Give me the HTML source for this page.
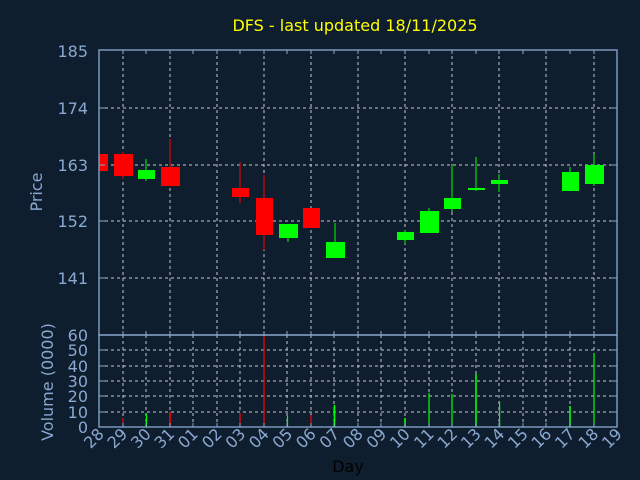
<!DOCTYPE html>
<html><head><meta charset="utf-8"><style>
html,body{margin:0;padding:0;background:#0f1e2f;}
svg{display:block;font-family:"DejaVu Sans","Liberation Sans",sans-serif;}
</style></head><body>
<svg width="640" height="480" viewBox="0 0 640 480" xmlns="http://www.w3.org/2000/svg">
<rect width="640" height="480" fill="#0f1e2f"/>
<text x="355" y="31" fill="#ffff00" font-size="16" text-anchor="middle">DFS - last updated 18/11/2025</text>
<g stroke="#c8c8c8" stroke-width="1" stroke-dasharray="3,3" fill="none">
<!-- price horizontal grid -->
<line x1="99" y1="108" x2="617" y2="108"/><line x1="99" y1="165" x2="617" y2="165"/>
<line x1="99" y1="221" x2="617" y2="221"/><line x1="99" y1="278" x2="617" y2="278"/>
<!-- price vertical grid -->
<line x1="123" y1="50" x2="123" y2="335"/><line x1="170" y1="50" x2="170" y2="335"/>
<line x1="217" y1="50" x2="217" y2="335"/><line x1="264" y1="50" x2="264" y2="335"/>
<line x1="311" y1="50" x2="311" y2="335"/><line x1="358" y1="50" x2="358" y2="335"/>
<line x1="405" y1="50" x2="405" y2="335"/><line x1="452" y1="50" x2="452" y2="335"/>
<line x1="499" y1="50" x2="499" y2="335"/><line x1="546" y1="50" x2="546" y2="335"/>
<line x1="594" y1="50" x2="594" y2="335"/>
<!-- volume horizontal -->
<line x1="99" y1="350" x2="617" y2="350"/><line x1="99" y1="366" x2="617" y2="366"/>
<line x1="99" y1="381" x2="617" y2="381"/><line x1="99" y1="396" x2="617" y2="396"/>
<line x1="99" y1="412" x2="617" y2="412"/>
<!-- volume vertical -->
<line x1="123" y1="335" x2="123" y2="427"/><line x1="146" y1="335" x2="146" y2="427"/>
<line x1="170" y1="335" x2="170" y2="427"/><line x1="193" y1="335" x2="193" y2="427"/>
<line x1="217" y1="335" x2="217" y2="427"/><line x1="240" y1="335" x2="240" y2="427"/>
<line x1="264" y1="335" x2="264" y2="427"/><line x1="287" y1="335" x2="287" y2="427"/>
<line x1="311" y1="335" x2="311" y2="427"/><line x1="334" y1="335" x2="334" y2="427"/>
<line x1="358" y1="335" x2="358" y2="427"/><line x1="381" y1="335" x2="381" y2="427"/>
<line x1="405" y1="335" x2="405" y2="427"/><line x1="429" y1="335" x2="429" y2="427"/>
<line x1="452" y1="335" x2="452" y2="427"/><line x1="476" y1="335" x2="476" y2="427"/>
<line x1="499" y1="335" x2="499" y2="427"/><line x1="523" y1="335" x2="523" y2="427"/>
<line x1="546" y1="335" x2="546" y2="427"/><line x1="570" y1="335" x2="570" y2="427"/>
<line x1="594" y1="335" x2="594" y2="427"/>
</g>
<!-- candles -->
<g fill="#ff0000" stroke="#ff0000" stroke-width="1">
<rect x="99" y="154" width="9" height="17" stroke="none"/>
<line x1="123" y1="152" x2="123" y2="179"/><rect x="114" y="154" width="19" height="22" stroke="none"/>
<line x1="170" y1="139" x2="170" y2="186"/><rect x="161" y="167" width="19" height="19" stroke="none"/>
<line x1="240" y1="162" x2="240" y2="203"/><rect x="232" y="188" width="17" height="9" stroke="none"/>
<line x1="264" y1="175" x2="264" y2="250"/><rect x="256" y="198" width="17" height="37" stroke="none"/>
<line x1="311" y1="208" x2="311" y2="228"/><rect x="303" y="208" width="17" height="20" stroke="none"/>
</g>
<g fill="#00ff00" stroke="#00ff00" stroke-width="1">
<line x1="146" y1="159" x2="146" y2="181"/><rect x="138" y="170" width="17" height="9" stroke="none"/>
<line x1="288" y1="224" x2="288" y2="242"/><rect x="279" y="224" width="19" height="14" stroke="none"/>
<line x1="335" y1="223" x2="335" y2="258"/><rect x="326" y="242" width="19" height="16" stroke="none"/>
<line x1="405" y1="230" x2="405" y2="244"/><rect x="397" y="232" width="17" height="8" stroke="none"/>
<line x1="429" y1="208" x2="429" y2="233"/><rect x="420" y="211" width="19" height="22" stroke="none"/>
<line x1="452" y1="165" x2="452" y2="212"/><rect x="444" y="198" width="17" height="11" stroke="none"/>
<line x1="476" y1="157" x2="476" y2="191"/><rect x="468" y="188" width="17" height="2" stroke="none"/>
<line x1="499" y1="174" x2="499" y2="192"/><rect x="491" y="180" width="17" height="4" stroke="none"/>
<line x1="570" y1="167" x2="570" y2="191"/><rect x="562" y="172" width="17" height="19" stroke="none"/>
<line x1="594" y1="154" x2="594" y2="186"/><rect x="585" y="165" width="19" height="19" stroke="none"/>
</g>
<!-- volume bars -->
<g stroke-width="1.2">
<line x1="123" y1="418" x2="123" y2="427" stroke="#ff0000"/>
<line x1="146.5" y1="414" x2="146.5" y2="427" stroke="#00ff00"/>
<line x1="170" y1="412" x2="170" y2="427" stroke="#ff0000" stroke-width="1.6"/>
<line x1="240" y1="413" x2="240" y2="427" stroke="#ff0000"/>
<line x1="264" y1="336" x2="264" y2="427" stroke="#ff0000"/>
<line x1="287.5" y1="416" x2="287.5" y2="427" stroke="#00ff00"/>
<line x1="311" y1="415" x2="311" y2="427" stroke="#ff0000"/>
<line x1="334.5" y1="405" x2="334.5" y2="427" stroke="#00ff00" stroke-width="1.6"/>
<line x1="405" y1="418" x2="405" y2="427" stroke="#00ff00" stroke-width="1.6"/>
<line x1="429" y1="393" x2="429" y2="427" stroke="#00ff00"/>
<line x1="452" y1="394" x2="452" y2="427" stroke="#00ff00"/>
<line x1="476" y1="374" x2="476" y2="427" stroke="#00ff00" stroke-width="1.6"/>
<line x1="499.6" y1="402" x2="499.6" y2="427" stroke="#00ff00"/>
<line x1="570" y1="406" x2="570" y2="427" stroke="#00ff00" stroke-width="1.6"/>
<line x1="594" y1="353" x2="594" y2="427" stroke="#00ff00"/>
</g>
<!-- frames -->
<g stroke="#8aa8d0" stroke-width="1.3" fill="none">
<rect x="99" y="50" width="518" height="285"/>
<rect x="99" y="335" width="518" height="92"/>
</g>
<g stroke="#8aa8d0" stroke-width="1">
<path d="M99 108h6M99 165h6M99 221h6M99 278h6M617 108h-6M617 165h-6M617 221h-6M617 278h-6
M99 350h6M99 366h6M99 381h6M99 396h6M99 412h6M617 350h-6M617 366h-6M617 381h-6M617 396h-6M617 412h-6
M123 50v4M146 50v4M170 50v4M193 50v4M217 50v4M240 50v4M264 50v4M287 50v4M311 50v4M334 50v4M358 50v4M381 50v4M405 50v4M429 50v4M452 50v4M476 50v4M499 50v4M523 50v4M546 50v4M570 50v4M594 50v4
M123 335v-4M146 335v-4M170 335v-4M193 335v-4M217 335v-4M240 335v-4M264 335v-4M287 335v-4M311 335v-4M334 335v-4M358 335v-4M381 335v-4M405 335v-4M429 335v-4M452 335v-4M476 335v-4M499 335v-4M523 335v-4M546 335v-4M570 335v-4M594 335v-4
M123 427v-4M146 427v-4M170 427v-4M193 427v-4M217 427v-4M240 427v-4M264 427v-4M287 427v-4M311 427v-4M334 427v-4M358 427v-4M381 427v-4M405 427v-4M429 427v-4M452 427v-4M476 427v-4M499 427v-4M523 427v-4M546 427v-4M570 427v-4M594 427v-4"/>
</g>
<!-- y labels -->
<g fill="#8aa8d0" font-size="16" text-anchor="end">
<text x="88" y="57">185</text><text x="88" y="114">174</text><text x="88" y="171">163</text>
<text x="88" y="227">152</text><text x="88" y="284">141</text>
<text x="88" y="341">60</text><text x="88" y="356">50</text><text x="88" y="372">40</text>
<text x="88" y="387">30</text><text x="88" y="402">20</text><text x="88" y="418">10</text><text x="88" y="433">0</text>
</g>
<text transform="translate(42,192) rotate(-90)" fill="#8aa8d0" font-size="16" text-anchor="middle">Price</text>
<text transform="translate(53,382) rotate(-90)" fill="#8aa8d0" font-size="16" text-anchor="middle">Volume (0000)</text>
<!-- x labels -->
<g fill="#8aa8d0" font-size="16" text-anchor="end">
<text transform="translate(105,435) rotate(-45)">28</text>
<text transform="translate(128.5,435) rotate(-45)">29</text>
<text transform="translate(152,435) rotate(-45)">30</text>
<text transform="translate(175.5,435) rotate(-45)">31</text>
<text transform="translate(199,435) rotate(-45)">01</text>
<text transform="translate(223,435) rotate(-45)">02</text>
<text transform="translate(246.5,435) rotate(-45)">03</text>
<text transform="translate(270,435) rotate(-45)">04</text>
<text transform="translate(293.5,435) rotate(-45)">05</text>
<text transform="translate(317,435) rotate(-45)">06</text>
<text transform="translate(340.5,435) rotate(-45)">07</text>
<text transform="translate(364,435) rotate(-45)">08</text>
<text transform="translate(387.5,435) rotate(-45)">09</text>
<text transform="translate(411,435) rotate(-45)">10</text>
<text transform="translate(435,435) rotate(-45)">11</text>
<text transform="translate(458.5,435) rotate(-45)">12</text>
<text transform="translate(482,435) rotate(-45)">13</text>
<text transform="translate(505.5,435) rotate(-45)">14</text>
<text transform="translate(529,435) rotate(-45)">15</text>
<text transform="translate(552.5,435) rotate(-45)">16</text>
<text transform="translate(576,435) rotate(-45)">17</text>
<text transform="translate(599.5,435) rotate(-45)">18</text>
<text transform="translate(623,435) rotate(-45)">19</text>
</g>
<text x="348" y="472" fill="#000000" font-size="16" text-anchor="middle">Day</text>
</svg>
</body></html>
